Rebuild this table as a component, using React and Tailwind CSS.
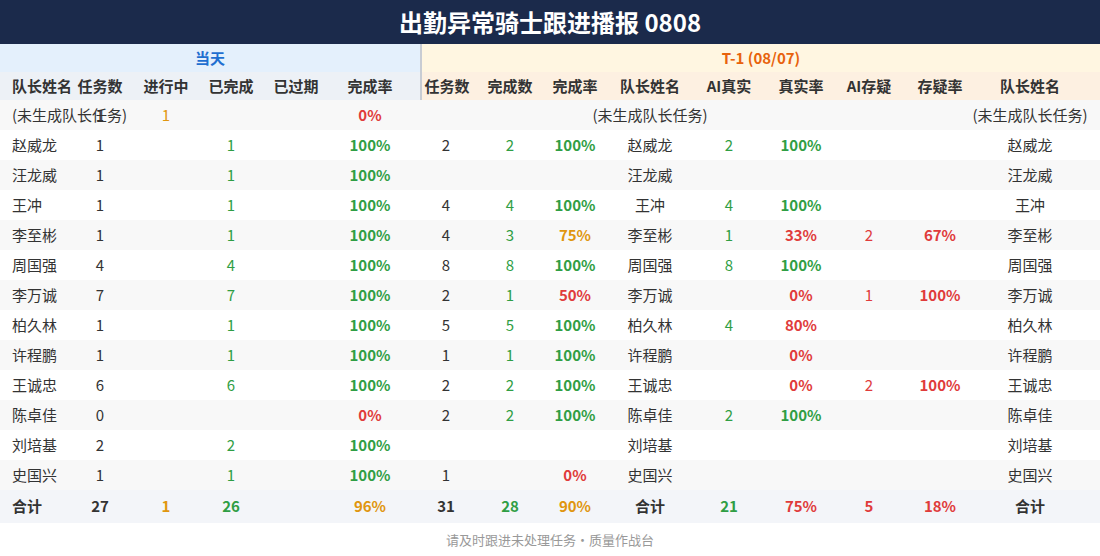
import React from "react";

const G = "text-[#2f9e44]";
const R = "text-[#e03b3b]";
const O = "text-[#e0960f]";
const K = "text-[#333333]";

// cell: [text, color, bold]
const rows = [
  ["(未生成队长任务)", ["1", K], ["1", O], null, null, ["0%", R, 1], null, null, null, ["(未生成队长任务)", K], null, null, null, null, ["(未生成队长任务)", K]],
  ["赵威龙", ["1", K], null, ["1", G], null, ["100%", G, 1], ["2", K], ["2", G], ["100%", G, 1], ["赵威龙", K], ["2", G], ["100%", G, 1], null, null, ["赵威龙", K]],
  ["汪龙威", ["1", K], null, ["1", G], null, ["100%", G, 1], null, null, null, ["汪龙威", K], null, null, null, null, ["汪龙威", K]],
  ["王冲", ["1", K], null, ["1", G], null, ["100%", G, 1], ["4", K], ["4", G], ["100%", G, 1], ["王冲", K], ["4", G], ["100%", G, 1], null, null, ["王冲", K]],
  ["李至彬", ["1", K], null, ["1", G], null, ["100%", G, 1], ["4", K], ["3", G], ["75%", O, 1], ["李至彬", K], ["1", G], ["33%", R, 1], ["2", R], ["67%", R, 1], ["李至彬", K]],
  ["周国强", ["4", K], null, ["4", G], null, ["100%", G, 1], ["8", K], ["8", G], ["100%", G, 1], ["周国强", K], ["8", G], ["100%", G, 1], null, null, ["周国强", K]],
  ["李万诚", ["7", K], null, ["7", G], null, ["100%", G, 1], ["2", K], ["1", G], ["50%", R, 1], ["李万诚", K], null, ["0%", R, 1], ["1", R], ["100%", R, 1], ["李万诚", K]],
  ["柏久林", ["1", K], null, ["1", G], null, ["100%", G, 1], ["5", K], ["5", G], ["100%", G, 1], ["柏久林", K], ["4", G], ["80%", R, 1], null, null, ["柏久林", K]],
  ["许程鹏", ["1", K], null, ["1", G], null, ["100%", G, 1], ["1", K], ["1", G], ["100%", G, 1], ["许程鹏", K], null, ["0%", R, 1], null, null, ["许程鹏", K]],
  ["王诚忠", ["6", K], null, ["6", G], null, ["100%", G, 1], ["2", K], ["2", G], ["100%", G, 1], ["王诚忠", K], null, ["0%", R, 1], ["2", R], ["100%", R, 1], ["王诚忠", K]],
  ["陈卓佳", ["0", K], null, null, null, ["0%", R, 1], ["2", K], ["2", G], ["100%", G, 1], ["陈卓佳", K], ["2", G], ["100%", G, 1], null, null, ["陈卓佳", K]],
  ["刘培基", ["2", K], null, ["2", G], null, ["100%", G, 1], null, null, null, ["刘培基", K], null, null, null, null, ["刘培基", K]],
  ["史国兴", ["1", K], null, ["1", G], null, ["100%", G, 1], ["1", K], null, ["0%", R, 1], ["史国兴", K], null, null, null, null, ["史国兴", K]],
];

const total = [
  "合计",
  ["27", K, 1], ["1", O, 1], ["26", G, 1], null, ["96%", O, 1],
  ["31", K, 1], ["28", G, 1], ["90%", O, 1], ["合计", K, 1], ["21", G, 1], ["75%", R, 1], ["5", R, 1], ["18%", R, 1], ["合计", K, 1],
];

const headers = ["任务数", "进行中", "已完成", "已过期", "完成率", "任务数", "完成数", "完成率", "队长姓名", "AI真实", "真实率", "AI存疑", "存疑率", "队长姓名"];

const gridCls =
  "grid grid-cols-[58px_84px_48px_82px_48px_100px_52px_76px_54px_96px_62px_82px_54px_88px_92px_24px]";

function Cell({ c, extra = "" }) {
  return (
    <div className={`flex items-center justify-center whitespace-nowrap ${extra}`}>
      {c ? <span className={`${c[1]} ${c[2] ? "font-bold" : ""}`}>{c[0]}</span> : null}
    </div>
  );
}

export default function App() {
  return (
    <div className="w-[1100px] h-[556px] bg-white font-['Noto_Sans_CJK_SC','Noto_Sans',sans-serif] text-[15px] text-[#333333] overflow-hidden">
      <div className="h-[44px] bg-[#1b2a4b] flex items-center justify-center">
        <span className="text-white text-[24px] font-bold">出勤异常骑士跟进播报 0808</span>
      </div>

      <div className="flex h-[28px] text-[15px] font-bold">
        <div className="w-[420px] bg-[#e4f0fc] flex items-center justify-center text-[#1f6fd0]">当天</div>
        <div className="flex-1 bg-[#fff6e1] border-l-2 border-[#c8ccd3] flex items-center justify-center text-[#e8620c]">
          T-1 (08/07)
        </div>
      </div>

      <div className={`${gridCls} h-[28px] font-bold bg-[#edf1f6]`}>
        <div className="flex items-center pl-3 whitespace-nowrap">队长姓名</div>
        {headers.map((h, i) => (
          <div
            key={i}
            className={`flex items-center justify-center whitespace-nowrap ${i < 5 ? "" : "bg-[#fdf0e1]"} ${i === 5 ? "border-l-2 border-[#c8ccd3]" : ""}`}
          >
            {h}
          </div>
        ))}
        <div className="bg-[#fdf0e1]" />
      </div>

      {rows.map((r, ri) => (
        <div key={ri} className={`${gridCls} h-[30px] ${ri % 2 === 0 ? "bg-[#f8f8f8]" : "bg-white"}`}>
          <div className="flex items-center pl-3 whitespace-nowrap">{r[0]}</div>
          {r.slice(1).map((c, ci) => (
            <Cell key={ci} c={c} />
          ))}
          <div />
        </div>
      ))}

      <div className={`${gridCls} h-[33px] bg-[#f3f5f9]`}>
        <div className="flex items-center pl-3 whitespace-nowrap font-bold">{total[0]}</div>
        {total.slice(1).map((c, ci) => (
          <Cell key={ci} c={c} />
        ))}
        <div />
      </div>

      <div className="h-[33px] flex items-center justify-center text-[13px] text-[#999999]">
        请及时跟进未处理任务·质量作战台
      </div>
    </div>
  );
}
